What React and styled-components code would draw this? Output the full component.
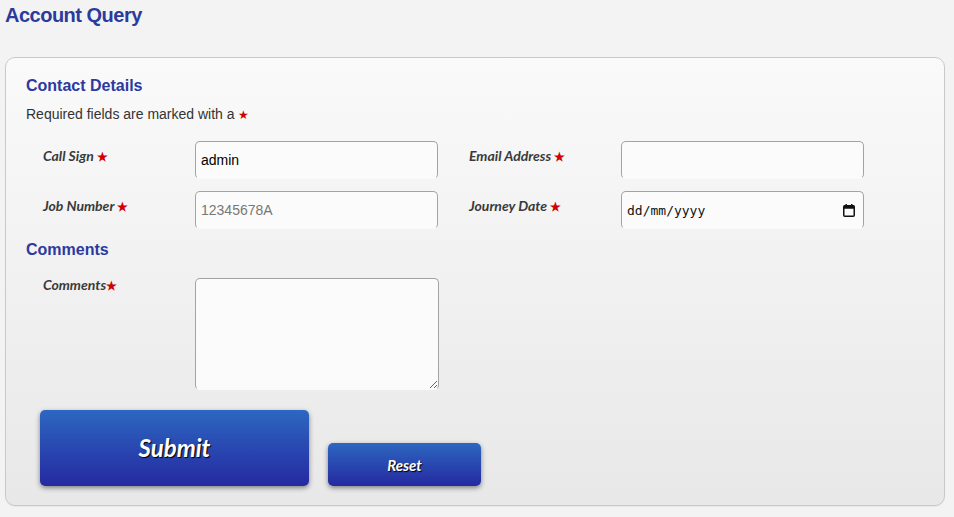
import React from 'react'
import styled, { createGlobalStyle } from 'styled-components'

const GlobalStyle = createGlobalStyle`
  html, body {
    margin: 0;
    padding: 0;
    background: #f3f3f3;
    font-family: "Liberation Sans", Arial, sans-serif;
  }
`

const CalendarIcon = () => (
  <svg width="12" height="13" viewBox="0 0 12 13">
    <rect x="0.75" y="1.75" width="10.5" height="10.5" rx="1" fill="none" stroke="#111" strokeWidth="1.5" />
    <rect x="0.75" y="1.75" width="10.5" height="3" fill="#111" />
    <rect x="2.5" y="0" width="1.5" height="2.5" fill="#111" />
    <rect x="8" y="0" width="1.5" height="2.5" fill="#111" />
  </svg>
)

const App = () => {
  return (
    <Page>
      <GlobalStyle />
      <Title>Account Query</Title>
      <Panel>
        <Heading>Contact Details</Heading>
        <Note>Required fields are marked with a <Star>★</Star></Note>
        <Grid $top="17px">
          <Label>Call Sign <Star>★</Star></Label>
          <Input type="text" defaultValue="admin" />
          <Label $right>Email Address <Star>★</Star></Label>
          <Input type="email" />
          <Label>Job Number <Star>★</Star></Label>
          <Input type="text" placeholder="12345678A" />
          <Label $right>Journey Date <Star>★</Star></Label>
          <DateField>
            <DateInput type="text" placeholder="dd/mm/yyyy" />
            <DateIcon><CalendarIcon /></DateIcon>
          </DateField>
        </Grid>
        <Heading $small>Comments</Heading>
        <Grid $top="18px">
          <Label $tight>Comments<Star>★</Star></Label>
          <TextArea />
        </Grid>
        <Buttons>
          <Button $big>Submit</Button>
          <Button>Reset</Button>
        </Buttons>
      </Panel>
    </Page>
  )
}

export default App

const Page = styled.div`
  width: 954px;
  height: 517px;
  padding: 3px 9px 0 5px;
  box-sizing: border-box;
  background: #f3f3f3;
`

const Title = styled.h1`
  margin: 0 0 30px 0;
  font-size: 20px;
  font-weight: 700;
  color: #2c3a9e;
  letter-spacing: -0.5px;
  line-height: 24px;
`

const Panel = styled.div`
  height: 449px;
  box-sizing: border-box;
  border: 1px solid #c9c9c9;
  border-radius: 10px;
  background: linear-gradient(#fafafa, #e8e8e8);
  padding: 17px 20px 0 20px;
  box-shadow: 0 1px 1px rgba(0, 0, 0, 0.05);
`

const Heading = styled.h2`
  margin: 0;
  font-size: 16px;
  font-weight: 700;
  color: #2c3a9e;
  line-height: 22px;
  margin-top: ${p => (p.$small ? '10px' : '0')};
`

const Note = styled.p`
  margin: 8px 0 0 0;
  font-size: 14px;
  color: #333;
  line-height: 18px;
`

const Star = styled.span`
  color: #d00000;
  font-size: 12px;
  font-style: normal;
`

const Grid = styled.div`
  display: grid;
  grid-template-columns: 152px 243px 183px 243px;
  row-gap: 12px;
  padding-left: 17px;
  margin-top: ${p => p.$top};
`

const Label = styled.label`
  font-family: Lato, "Noto Sans", sans-serif;
  font-style: italic;
  font-weight: 700;
  font-size: 14px;
  line-height: 18px;
  color: #3a3a3a;
  padding-top: 6px;
  margin-top: ${p => (p.$tight ? '-3px' : '0')};
  padding-top: ${p => (p.$tight ? '0' : '6px')};
  padding-left: ${p => (p.$right ? '31px' : '0')};
`

const Field = `
  box-sizing: border-box;
  width: 243px;
  border: 1px solid #a3a3a3;
  border-bottom-color: #fafafa;
  border-radius: 5px;
  background: #fcfbfc;
`

const Input = styled.input`
  ${Field}
  height: 38px;
  padding: 0 5px;
  font-family: "Liberation Sans", Arial, sans-serif;
  font-size: 14px;
  color: #000;

  &::placeholder {
    color: #777;
  }
`

const DateField = styled.div`
  position: relative;
  width: 243px;
  height: 38px;
`

const DateInput = styled.input`
  ${Field}
  height: 38px;
  padding: 0 5px;
  font-family: "DejaVu Sans Mono", monospace;
  font-size: 13px;
  color: #111;

  &::placeholder {
    color: #111;
  }
`

const DateIcon = styled.span`
  position: absolute;
  right: 9px;
  top: 13px;
  line-height: 0;
  pointer-events: none;
`

const TextArea = styled.textarea`
  ${Field}
  height: 112px;
  width: 244px;
  margin-top: -1px;
`

const Buttons = styled.div`
  display: flex;
  align-items: flex-end;
  gap: 19px;
  padding-left: 14px;
  margin-top: 20px;
`

const Button = styled.button`
  width: ${p => (p.$big ? '269px' : '153px')};
  height: ${p => (p.$big ? '76px' : '43px')};
  border: none;
  border-radius: 5px;
  background: linear-gradient(#2d67c1, #2529a0);
  box-shadow: 0 2px 5px rgba(0, 0, 0, 0.45);
  color: #fff;
  font-family: Lato, "Noto Sans", sans-serif;
  font-style: italic;
  font-weight: 700;
  font-size: ${p => (p.$big ? '24px' : '15px')};
  text-shadow: 1px 1px 1px #000;
  padding: 0;
  padding-bottom: ${p => (p.$big ? '1px' : '0')};
  cursor: pointer;
`
